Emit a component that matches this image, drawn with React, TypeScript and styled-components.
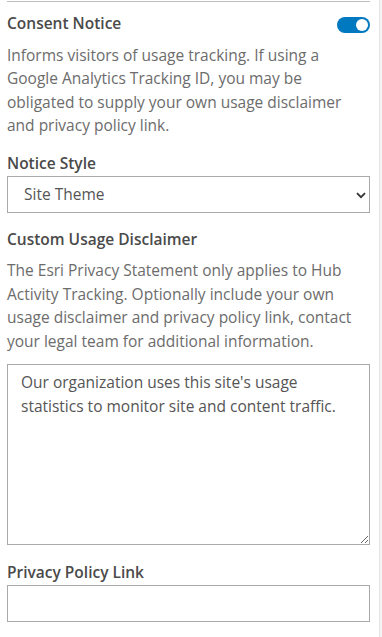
import React, { useState } from 'react'
import styled, { createGlobalStyle } from 'styled-components'

const GlobalStyle = createGlobalStyle`
  html, body {
    margin: 0;
    padding: 0;
    background: #ffffff;
  }
  body {
    font-family: "Open Sans", "Liberation Sans", sans-serif;
    color: #4c4c4c;
  }
  * {
    box-sizing: border-box;
  }
`

const Shell = styled.div`
  width: 382px;
  height: 637px;
  display: flex;
  overflow: hidden;
`

const Panel = styled.div`
  flex: 1;
  padding: 0 9px 0 7px;
`

const ScrollEdge = styled.div`
  width: 3px;
  border-left: 1px solid #e4e4e4;
  background: #f4f4f4;
`

const Divider = styled.hr`
  margin: 1px 0 0;
  border: 0;
  border-top: 1px solid #bdbdbd;
`

const HeaderRow = styled.div`
  display: flex;
  align-items: flex-start;
  justify-content: space-between;
  margin-top: 11px;
`

const Heading = styled.label<{ $top?: number }>`
  display: block;
  font-size: 15.5px;
  font-weight: 600;
  color: #4a4a4a;
  line-height: 20px;
  margin-top: ${({ $top }) => $top ?? 0}px;
`

const Hint = styled.p`
  margin: 10.5px 0 0;
  font-size: 15.5px;
  line-height: 23.5px;
  color: #6c6c6c;
`

const Toggle = styled.button<{ $on: boolean }>`
  position: relative;
  width: 33px;
  height: 16px;
  margin-top: 4px;
  padding: 0;
  border: 0;
  border-radius: 8px;
  background: ${({ $on }) => ($on ? '#0079c1' : '#bdbdbd')};
  cursor: pointer;

  &::after {
    content: '';
    position: absolute;
    top: 2px;
    left: ${({ $on }) => ($on ? '19px' : '2px')};
    width: 12px;
    height: 12px;
    border-radius: 50%;
    background: #ffffff;
  }
`

const SelectWrap = styled.div`
  position: relative;
  margin-top: 3px;
`

const Select = styled.select`
  display: block;
  width: 100%;
  height: 37px;
  padding: 0 30px 0 16px;
  appearance: none;
  border: 1px solid #a9a9a9;
  border-radius: 0;
  background: #ffffff;
  font-family: inherit;
  font-size: 15.5px;
  color: #555555;
  outline: none;
`

const Chevron = styled.svg`
  position: absolute;
  right: 4px;
  top: 16px;
  pointer-events: none;
`

const TextArea = styled.textarea`
  display: block;
  width: 100%;
  height: 181px;
  margin-top: 11px;
  padding: 5px 13px;
  border: 1px solid #a9a9a9;
  border-radius: 0;
  font-family: inherit;
  font-size: 15.5px;
  line-height: 24px;
  color: #555555;
  resize: vertical;
  outline: none;
`

const TextInput = styled.input`
  display: block;
  width: 100%;
  height: 37px;
  margin-top: 3px;
  padding: 0 13px;
  border: 1px solid #a9a9a9;
  border-radius: 0;
  font-family: inherit;
  font-size: 15.5px;
  outline: none;
`

export default function App() {
  const [consent, setConsent] = useState(true)
  const [style, setStyle] = useState('site')
  const [disclaimer, setDisclaimer] = useState(
    "Our organization uses this site's usage statistics to monitor site and content traffic."
  )
  const [link, setLink] = useState('')

  return (
    <Shell>
      <GlobalStyle />
      <Panel>
        <Divider />
        <HeaderRow>
          <Heading>Consent Notice</Heading>
          <Toggle $on={consent} aria-label="Consent Notice" onClick={() => setConsent(!consent)} />
        </HeaderRow>
        <Hint>
          Informs visitors of usage tracking. If using a Google Analytics Tracking ID, you may be
          obligated to supply your own usage disclaimer and privacy policy link.
        </Hint>

        <Heading $top={15}>Notice Style</Heading>
        <SelectWrap>
          <Select value={style} onChange={(e) => setStyle(e.target.value)}>
            <option value="site">Site Theme</option>
            <option value="light">Light</option>
            <option value="dark">Dark</option>
          </Select>
          <Chevron width="10" height="7" viewBox="0 0 10 7">
            <path d="M1 1.2 5 5.2 9 1.2" fill="none" stroke="#333" strokeWidth="1.8" />
          </Chevron>
        </SelectWrap>

        <Heading $top={16}>Custom Usage Disclaimer</Heading>
        <Hint>
          The Esri Privacy Statement only applies to Hub Activity Tracking. Optionally include your own
          usage disclaimer and privacy policy link, contact your legal team for additional information.
        </Hint>
        <TextArea value={disclaimer} onChange={(e) => setDisclaimer(e.target.value)} />

        <Heading $top={17}>Privacy Policy Link</Heading>
        <TextInput value={link} onChange={(e) => setLink(e.target.value)} />
      </Panel>
      <ScrollEdge />
    </Shell>
  )
}
